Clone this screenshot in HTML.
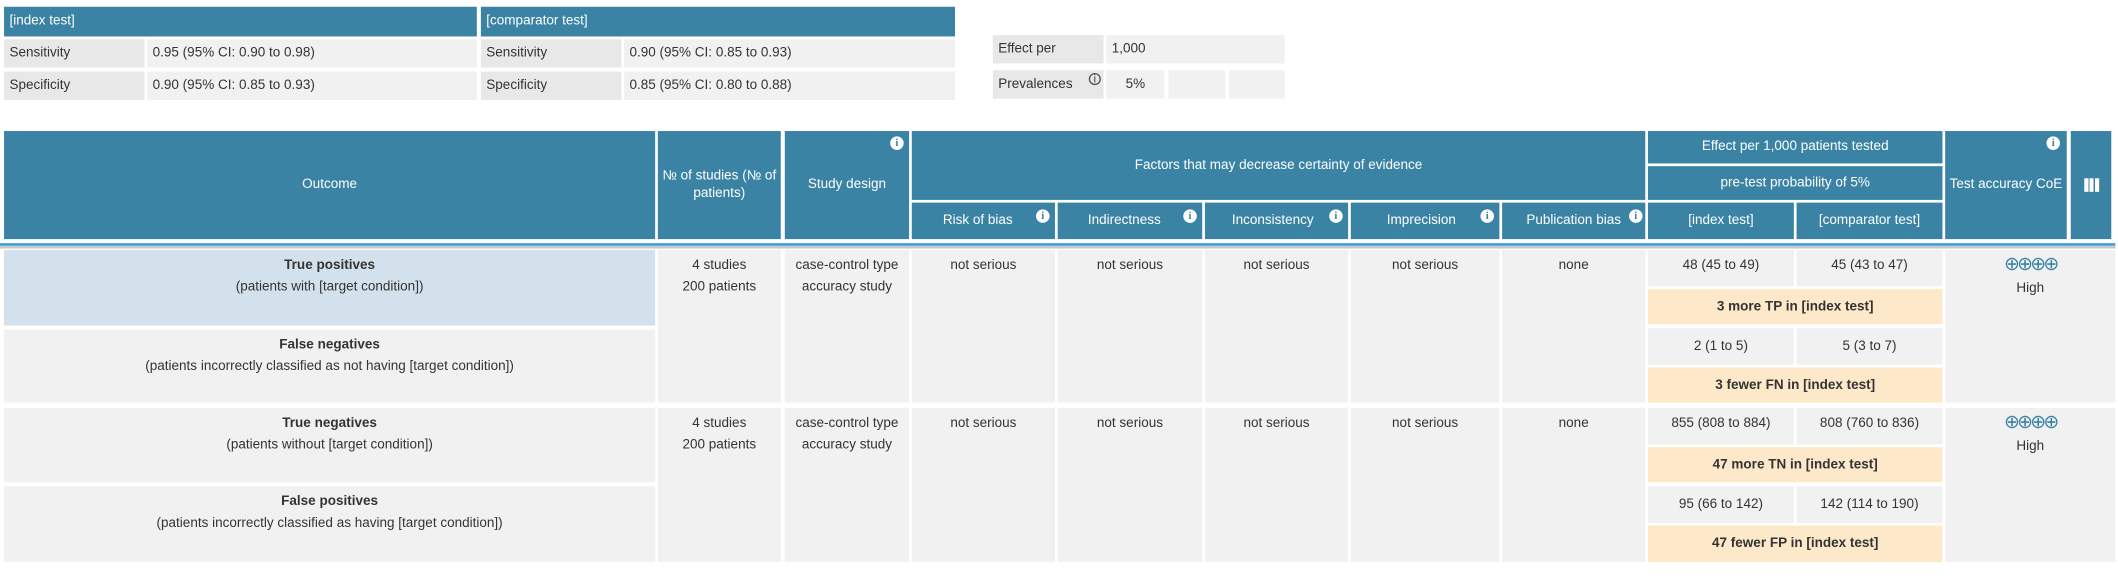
<!DOCTYPE html>
<html><head><meta charset="utf-8"><style>
html,body{margin:0;padding:0;background:#fff;width:2118px;height:580px;overflow:hidden}
#w{position:absolute;left:0;top:0;width:1568px;height:430px;transform:scale(1.3508);transform-origin:0 0;font-family:"Liberation Sans",sans-serif;font-size:10px;color:#333}
#w div{position:absolute;box-sizing:border-box}
.h{background:#3a83a5;color:#fff;display:flex;align-items:center;justify-content:center;text-align:center;line-height:1.35}
.l{background:#e8e8e8;padding-left:4px;display:flex;align-items:center}
.v{background:#f1f1f1;padding-left:4px;display:flex;align-items:center}
.c{background:#f1f1f1;text-align:center;padding-top:4px;line-height:1.6}
.o{background:#fde9c9;font-weight:bold;display:flex;align-items:center;justify-content:center}
.n{background:#f1f1f1;display:flex;align-items:center;justify-content:center}
.i{width:10px;height:10px;border-radius:50%;background:#fff;color:#3a83a5;font-size:8px;font-weight:bold;font-family:"Liberation Serif",serif;text-align:center;line-height:10px}
.p{color:#3a83a5;font-size:14px;letter-spacing:-2px;line-height:14px}
</style></head><body><div id="w">
<div class="h" style="left:3px;top:5px;width:350px;height:22px;justify-content:flex-start;padding-left:4px">[index test]</div>
<div class="h" style="left:356px;top:5px;width:351px;height:22px;justify-content:flex-start;padding-left:4px">[comparator test]</div>
<div class="l" style="left:3px;top:29px;width:104px;height:21px">Sensitivity</div>
<div class="v" style="left:109px;top:29px;width:244px;height:21px">0.95 (95% CI: 0.90 to 0.98)</div>
<div class="l" style="left:356px;top:29px;width:104px;height:21px">Sensitivity</div>
<div class="v" style="left:462px;top:29px;width:245px;height:21px">0.90 (95% CI: 0.85 to 0.93)</div>
<div class="l" style="left:3px;top:53px;width:104px;height:21px">Specificity</div>
<div class="v" style="left:109px;top:53px;width:244px;height:21px">0.90 (95% CI: 0.85 to 0.93)</div>
<div class="l" style="left:356px;top:53px;width:104px;height:21px">Specificity</div>
<div class="v" style="left:462px;top:53px;width:245px;height:21px">0.85 (95% CI: 0.80 to 0.88)</div>
<div class="l" style="left:735px;top:26px;width:82px;height:21px">Effect per</div>
<div class="v" style="left:819px;top:26px;width:132px;height:21px">1,000</div>
<div class="l" style="left:735px;top:52px;width:82px;height:21px">Prevalences<span style="position:absolute;left:71px;top:2px;font-size:8px;border:1px solid #555;border-radius:50%;width:7px;height:7px;line-height:7px;text-align:center">i</span></div>
<div class="n" style="left:819px;top:52px;width:43px;height:21px">5%</div>
<div class="n" style="left:865px;top:52px;width:42px;height:21px"></div>
<div class="n" style="left:910px;top:52px;width:41px;height:21px"></div>

<div class="h" style="left:3px;top:97px;width:482px;height:80px">Outcome</div>
<div class="h" style="left:487px;top:97px;width:91px;height:80px">№ of studies (№ of patients)</div>
<div class="h" style="left:581px;top:97px;width:92px;height:80px">Study design<div class="i" style="right:4px;top:4px">i</div></div>
<div class="h" style="left:675px;top:97px;width:543px;height:51px">Factors that may decrease certainty of evidence</div>
<div class="h" style="left:675px;top:150px;width:106px;height:27px">Risk of bias&nbsp;&nbsp;&nbsp;<div class="i" style="right:4px;top:5px">i</div></div>
<div class="h" style="left:783px;top:150px;width:107px;height:27px">Indirectness&nbsp;&nbsp;&nbsp;<div class="i" style="right:4px;top:5px">i</div></div>
<div class="h" style="left:892px;top:150px;width:106px;height:27px">Inconsistency&nbsp;&nbsp;<div class="i" style="right:4px;top:5px">i</div></div>
<div class="h" style="left:1000px;top:150px;width:110px;height:27px">Imprecision&nbsp;&nbsp;<div class="i" style="right:4px;top:5px">i</div></div>
<div class="h" style="left:1112px;top:150px;width:106px;height:27px">Publication bias<div class="i" style="right:2px;top:5px">i</div></div>
<div class="h" style="left:1220px;top:97px;width:218px;height:24px">Effect per 1,000 patients tested</div>
<div class="h" style="left:1220px;top:123px;width:218px;height:25px">pre-test probability of 5%</div>
<div class="h" style="left:1220px;top:150px;width:108px;height:27px">[index test]</div>
<div class="h" style="left:1330px;top:150px;width:108px;height:27px">[comparator test]</div>
<div class="h" style="left:1440px;top:97px;width:90px;height:80px">Test accuracy CoE<div class="i" style="right:5px;top:4px">i</div></div>
<div class="h" style="left:1533px;top:97px;width:30px;height:80px"><span style="display:inline-block;width:11px;height:10px;background:linear-gradient(90deg,#fff 3px,#3a83a5 3px,#3a83a5 4px,#fff 4px,#fff 7px,#3a83a5 7px,#3a83a5 8px,#fff 8px)"></span></div>
<div style="left:0;top:180px;width:1566px;height:2px;background:#3aa2d4"></div>
<div style="left:0;top:182px;width:1566px;height:2px;background:#c8c8c8"></div>

<div class="c" style="left:3px;top:185px;width:482px;height:56px;background:#d3e1ec"><b>True positives</b><br>(patients with [target condition])</div>
<div class="c" style="left:3px;top:244px;width:482px;height:54px"><b>False negatives</b><br>(patients incorrectly classified as not having [target condition])</div>
<div class="c" style="left:3px;top:302px;width:482px;height:55px"><b>True negatives</b><br>(patients without [target condition])</div>
<div class="c" style="left:3px;top:360px;width:482px;height:56px"><b>False positives</b><br>(patients incorrectly classified as having [target condition])</div>

<div class="c" style="left:487px;top:185px;width:91px;height:113px">4 studies<br>200 patients</div>
<div class="c" style="left:581px;top:185px;width:92px;height:113px">case-control type<br>accuracy study</div>
<div class="c" style="left:675px;top:185px;width:106px;height:113px">not serious</div>
<div class="c" style="left:783px;top:185px;width:107px;height:113px">not serious</div>
<div class="c" style="left:892px;top:185px;width:106px;height:113px">not serious</div>
<div class="c" style="left:1000px;top:185px;width:110px;height:113px">not serious</div>
<div class="c" style="left:1112px;top:185px;width:106px;height:113px">none</div>
<div class="c" style="left:1440px;top:185px;width:126px;height:113px;padding-top:3px"><span class="p">⊕⊕⊕⊕</span><br>High</div>

<div class="c" style="left:487px;top:302px;width:91px;height:114px">4 studies<br>200 patients</div>
<div class="c" style="left:581px;top:302px;width:92px;height:114px">case-control type<br>accuracy study</div>
<div class="c" style="left:675px;top:302px;width:106px;height:114px">not serious</div>
<div class="c" style="left:783px;top:302px;width:107px;height:114px">not serious</div>
<div class="c" style="left:892px;top:302px;width:106px;height:114px">not serious</div>
<div class="c" style="left:1000px;top:302px;width:110px;height:114px">not serious</div>
<div class="c" style="left:1112px;top:302px;width:106px;height:114px">none</div>
<div class="c" style="left:1440px;top:302px;width:126px;height:114px;padding-top:3px"><span class="p">⊕⊕⊕⊕</span><br>High</div>

<div class="c" style="left:1220px;top:185px;width:108px;height:27px">48 (45 to 49)</div>
<div class="c" style="left:1330px;top:185px;width:108px;height:27px">45 (43 to 47)</div>
<div class="o" style="left:1220px;top:214px;width:218px;height:26px">3 more TP in [index test]</div>
<div class="n" style="left:1220px;top:243px;width:108px;height:27px">2 (1 to 5)</div>
<div class="n" style="left:1330px;top:243px;width:108px;height:27px">5 (3 to 7)</div>
<div class="o" style="left:1220px;top:272px;width:218px;height:26px">3 fewer FN in [index test]</div>

<div class="c" style="left:1220px;top:302px;width:108px;height:27px">855 (808 to 884)</div>
<div class="c" style="left:1330px;top:302px;width:108px;height:27px">808 (760 to 836)</div>
<div class="o" style="left:1220px;top:331px;width:218px;height:26px">47 more TN in [index test]</div>
<div class="n" style="left:1220px;top:360px;width:108px;height:27px">95 (66 to 142)</div>
<div class="n" style="left:1330px;top:360px;width:108px;height:27px">142 (114 to 190)</div>
<div class="o" style="left:1220px;top:389px;width:218px;height:27px">47 fewer FP in [index test]</div>
</div></body></html>
